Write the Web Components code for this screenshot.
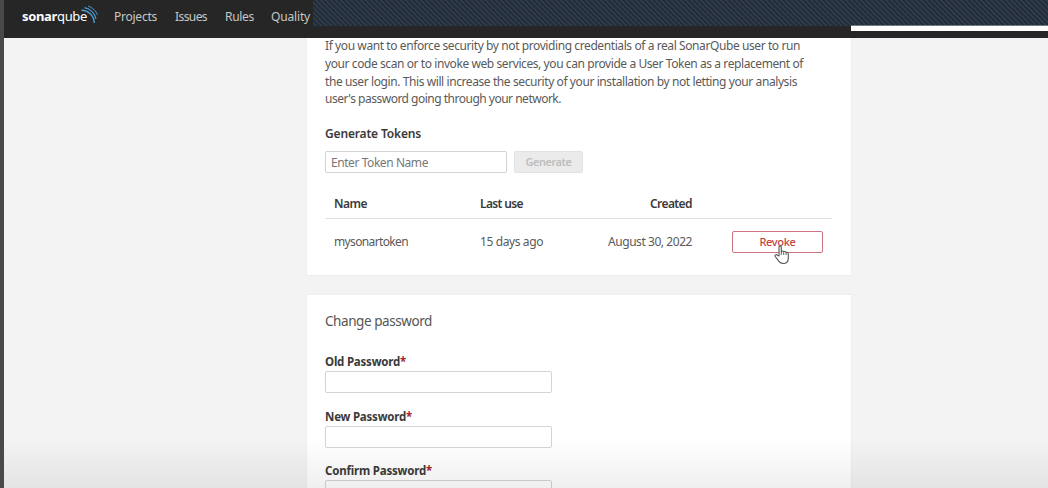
<!DOCTYPE html>
<html lang="en">
<head>
<meta charset="utf-8">
<title>SonarQube - Security</title>
<style>
html, body { margin: 0; height: 100%; overflow: hidden; background: #f3f3f3; }
body { font: 12px/18px "Noto Sans", "Open Sans", sans-serif; color: #5a5a5a; }
</style>
</head>
<body>
<sq-app></sq-app>
<script>
const define = (name, markup, init) => {
  const template = document.createElement('template');
  template.innerHTML = markup;
  customElements.define(name, class extends HTMLElement {
    constructor() {
      super();
      this.attachShadow({ mode: 'open' }).append(template.content.cloneNode(true));
    }
    connectedCallback() { if (init) init(this, this.shadowRoot); }
  });
};

/* A single line of text tracked to the width given in "w". */
define('sq-text', `<style>
  :host { display: block; white-space: nowrap; width: max-content; }
  span { display: inline-block; }
</style><span><slot></slot></span>`, (host, root) => {
  const span = root.querySelector('span');
  const target = parseFloat(host.getAttribute('w'));
  const count = host.textContent.length;
  if (target && count) span.style.letterSpacing = (target - span.getBoundingClientRect().width) / count + 'px';
});

define('sq-logo', `<style>
  :host { display: flex; width: 76px; height: 22px; color: #fff; }
  .name { display: flex; padding-top: 3px; font-size: 13px; line-height: 18px; }
  b { font-weight: 700; }
  svg { flex: none; margin: 1px 0 0 -7px; }
</style>
<div class="name"><b><sq-text w="35">sonar</sq-text></b><sq-text w="30">qube</sq-text></div>
<svg width="20" height="20" viewBox="0 0 20 20" fill="none" stroke="#4b9fd5">
  <path d="M1.500 5.300C8 5.300 14 10.500 14.300 18" stroke-width="1.400"/>
  <path d="M4.500 2.600C10.500 3.600 15 8.300 16 14" stroke-width="1.100"/>
  <path d="M8 1C12.500 2.300 16 5.800 17.500 10" stroke-width=".9"/>
</svg>`);

define('sq-header', `<style>
  :host { display: flex; height: 38px; background: #262626; color: #c6c6c6; }
  nav { display: grid; grid-template-columns: 92px 61px 50px 46px 60px; width: 309px; box-sizing: border-box; padding-top: 8px; }
  nav > sq-text { margin-left: 18px; }
  sq-logo { margin: -4px 0 0 18px; }
  .cover { flex: 1; }
  .hatch { height: 26px; background: repeating-linear-gradient(45deg, #232e3a 0 1.700px, #374754 2.600px, #232e3a 3.536px); }
  .strip { height: 5px; margin-left: 538px; background: #fff; box-shadow: 0 -1px #737b82; }
</style>
<nav>
  <sq-logo></sq-logo>
  <sq-text w="43">Projects</sq-text>
  <sq-text w="32">Issues</sq-text>
  <sq-text w="29">Rules</sq-text>
  <sq-text w="39">Quality</sq-text>
</nav>
<div class="cover"><div class="hatch"></div><div class="strip"></div></div>`);

define('sq-card', `<style>
  :host { display: block; box-sizing: border-box; width: 546px; padding: 0 18px; background: #fff; border: 1px solid #eee; }
</style><slot></slot>`);

define('sq-input', `<style>
  :host { display: block; box-sizing: border-box; height: 22px; border: 1px solid #d4d4d4; border-radius: 2px; padding: 2px 5px 0; background: #fff; color: #777; }
</style><slot></slot>`);

define('sq-button', `<style>
  :host { display: flex; box-sizing: border-box; height: 22px; justify-content: center; align-items: center; border: 1px solid #e2e2e2; border-radius: 2px; background: #ebebeb; color: #bdbdbd; font-size: 11px; font-weight: 600; }
  :host([danger]) { border-color: #cf7380; background: #fff; color: #c0433f; font-weight: 500; }
</style><slot></slot>`);

define('sq-field', `<style>
  :host { display: block; height: 54.700px; }
  .label { display: flex; height: 19px; font-weight: 700; font-size: 11.500px; color: #3a3a3a; line-height: 19px; }
  .label i { font-style: normal; color: #a4262c; }
  sq-input { width: 227px; }
</style><div class="label"><slot></slot><i>*</i></div><sq-input></sq-input>`);

define('sq-cursor', `<style>:host { display: block; }</style>
<svg width="16" height="20" viewBox="0 0 16 20"><path d="M5 11V2.200C5 .6 7.300.6 7.300 2.200V7C7.300 5.700 9.700 5.700 9.700 7.200C10 6.200 12 6.300 12.100 7.700C12.600 7 14.300 7.300 14.300 8.800V13C14.300 16 12.500 18.500 9.300 18.500C6.500 18.500 5.200 17 4 15.200L1.200 11.500C.4 10 2 9.100 3.200 10Z" fill="#fff" stroke="#555" stroke-width="1.100" stroke-linejoin="round"/><path d="M7.300 7V10M9.700 7.500V10M12.100 8V10" stroke="#555" stroke-width=".9"/></svg>`);

define('sq-tokens', `<style>
  :host { display: block; margin-top: -1px; }
  .intro { line-height: 17.800px; }
  h3 { margin: 17px 0 0; height: 26px; font-size: 12px; font-weight: 600; line-height: 18px; color: #3a3a3a; }
  .form { display: flex; gap: 7px; }
  .form sq-input { width: 182px; }
  .form sq-button { width: 69px; }
  .row { display: grid; grid-template-columns: 146px 100px 112px 1fr; width: 507px; box-sizing: border-box; padding: 0 9px; }
  .head { margin-top: 20px; height: 26px; border-bottom: 1px solid #e0e0e0; font-weight: 600; color: #3a3a3a; padding-top: 2px; }
  .body { padding-top: 14px; }
  .right { justify-self: end; }
  .action { position: relative; justify-self: end; margin-top: -2px; }
  .action sq-button { width: 91px; }
  sq-cursor { position: absolute; left: 42px; top: 14px; }
</style>
<div class="intro">
  <sq-text w="475">If you want to enforce security by not providing credentials of a real SonarQube user to run</sq-text>
  <sq-text w="478">your code scan or to invoke web services, you can provide a User Token as a replacement of</sq-text>
  <sq-text w="472">the user login. This will increase the security of your installation by not letting your analysis</sq-text>
  <sq-text w="236">user's password going through your network.</sq-text>
</div>
<h3><sq-text w="96">Generate Tokens</sq-text></h3>
<div class="form"><sq-input><sq-text w="97">Enter Token Name</sq-text></sq-input><sq-button><sq-text w="46">Generate</sq-text></sq-button></div>
<div class="row head"><sq-text w="33">Name</sq-text><sq-text w="43">Last use</sq-text><sq-text class="right" w="42">Created</sq-text></div>
<div class="row body"><sq-text w="74">mysonartoken</sq-text><sq-text w="63">15 days ago</sq-text><sq-text class="right" w="84">August 30, 2022</sq-text>
  <div class="action"><sq-button danger><sq-text w="36">Revoke</sq-text></sq-button><sq-cursor></sq-cursor></div></div>`);

define('sq-password', `<style>
  :host { display: block; padding-top: 17px; }
  h2 { margin: 0; height: 40px; font-size: 13.500px; line-height: 18px; font-weight: 400; color: #555; }
</style>
<h2><sq-text w="107">Change password</sq-text></h2>
<sq-field><sq-text w="75">Old Password</sq-text></sq-field>
<sq-field><sq-text w="81">New Password</sq-text></sq-field>
<sq-field><sq-text w="101">Confirm Password</sq-text></sq-field>`);

define('sq-app', `<style>
  :host { display: flex; height: 100vh; position: relative; overflow: hidden; }
  .rail { flex: none; width: 4px; background: #4b4948; }
  .page { flex: 1; min-width: 0; display: flex; flex-direction: column; }
  sq-header { flex: none; }
  main { flex: 1; min-height: 0; overflow: hidden; display: flex; flex-direction: column; gap: 18px; padding-left: 302px; }
  sq-card { flex: none; }
  .tokens { height: 238px; border-top: 0; }
  .password { height: 240px; }
  .shade { position: absolute; left: 4px; right: 0; bottom: 0; height: 50px; background: linear-gradient(#0000, #00000010); }
</style>
<div class="rail"></div>
<div class="page"><sq-header></sq-header>
<main><sq-card class="tokens"><sq-tokens></sq-tokens></sq-card><sq-card class="password"><sq-password></sq-password></sq-card></main></div>
<div class="shade"></div>`);
</script>
</body>
</html>
